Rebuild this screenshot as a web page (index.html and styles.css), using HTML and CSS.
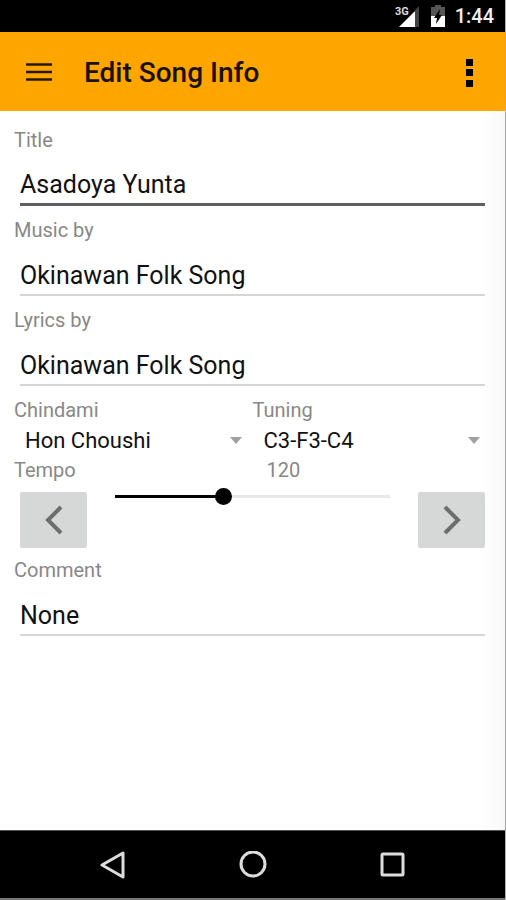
FILE: index.html
```html
<!DOCTYPE html>
<html lang="en">

<head>
    <meta charset="UTF-8">
    <meta name="viewport" content="width=device-width, initial-scale=1.0">
    <title>Edit Song Info</title>
    <link rel="stylesheet" href="styles.css">
</head>

<body>
    <div class="status-bar">
        <svg class="signal" width="28" height="24" viewBox="0 0 28 24" role="img" aria-label="3G signal">
            <path d="M22 6L26 2V23H22z" fill="#444" />
            <path d="M6 23L22 7V23z" fill="#fff" />
            <text class="network" x="2" y="11">3G</text>
        </svg>
        <svg class="battery" width="14" height="22" viewBox="0 0 14 22" role="img" aria-label="Battery charging">
            <path d="M4 0H10V2H14V12H0V2H4z" fill="#555" />
            <path d="M0 11H14V22H0z" fill="#fff" />
            <path d="M9 4L3 13H6L5 19L11 10H8z" fill="#000" />
        </svg>
        <span class="clock">1:44</span>
    </div>

    <header class="app-bar">
        <button class="icon-button" aria-label="Open menu">
            <svg width="26" height="20" viewBox="0 0 26 20">
                <path d="M0 2.500H26M0 10H26M0 17.500H26" stroke="#241800" stroke-width="2.500" />
            </svg>
        </button>
        <h1 class="app-title">Edit Song Info</h1>
        <button class="icon-button" aria-label="More options">
            <svg width="8" height="30" viewBox="0 0 8 30">
                <path d="M1 2H8V9H1zM1 12H8V19H1zM1 23H8V30H1z" fill="#000" />
            </svg>
        </button>
    </header>

    <main class="song-form">
        <div class="field">
            <label for="title">Title</label>
            <input class="text-input active" type="text" id="title" value="Asadoya Yunta">
        </div>
        <div class="field">
            <label for="music">Music by</label>
            <input class="text-input" type="text" id="music" value="Okinawan Folk Song">
        </div>
        <div class="field">
            <label for="lyrics">Lyrics by</label>
            <input class="text-input" type="text" id="lyrics" value="Okinawan Folk Song">
        </div>

        <div class="columns">
            <div class="select-field">
                <label for="chindami">Chindami</label>
                <select id="chindami">
                    <option>Hon Choushi</option>
                </select>
            </div>
            <div class="select-field">
                <label for="tuning">Tuning</label>
                <select id="tuning">
                    <option>C3-F3-C4</option>
                </select>
            </div>
        </div>

        <div class="columns">
            <label for="tempo">Tempo</label>
            <output class="tempo-value" id="tempo_value" for="tempo">120</output>
        </div>
        <div class="tempo-row">
            <button class="step-button" id="tempo_down" aria-label="Slower">
                <svg width="18" height="30" viewBox="0 0 18 30">
                    <path d="M16 2L3 15L16 28" fill="none" stroke="#6c6e6d" stroke-width="4" />
                </svg>
            </button>
            <input class="tempo-slider" type="range" id="tempo" min="20" max="278" value="120" style="--fill: 39%">
            <button class="step-button" id="tempo_up" aria-label="Faster">
                <svg width="18" height="30" viewBox="0 0 18 30">
                    <path d="M2 2L15 15L2 28" fill="none" stroke="#6c6e6d" stroke-width="4" />
                </svg>
            </button>
        </div>

        <div class="field">
            <label for="comment">Comment</label>
            <input class="text-input" type="text" id="comment" value="None">
        </div>
    </main>

    <nav class="nav-bar">
        <button class="icon-button" aria-label="Back">
            <svg width="28" height="28" viewBox="0 0 28 28">
                <path d="M24 2V26L3 14z" fill="none" stroke="#ddd" stroke-width="3" stroke-linejoin="round" />
            </svg>
        </button>
        <button class="icon-button" aria-label="Home">
            <svg width="28" height="28" viewBox="0 0 28 28">
                <circle cx="14" cy="13" r="12" fill="none" stroke="#ddd" stroke-width="3" />
            </svg>
        </button>
        <button class="icon-button" aria-label="Recent apps">
            <svg width="28" height="28" viewBox="0 0 28 28">
                <rect x="3" y="3" width="21" height="21" rx="1" fill="none" stroke="#ddd" stroke-width="3" />
            </svg>
        </button>
    </nav>

    <script>
        const tempo = document.getElementById('tempo');

        function updateTempo() {
            const fill = (tempo.value - tempo.min) / (tempo.max - tempo.min) * 100;
            tempo.style.setProperty('--fill', fill + '%');
            document.getElementById('tempo_value').innerText = tempo.value;
        }

        tempo.addEventListener('input', updateTempo);
        document.getElementById('tempo_down').addEventListener('click', function () {
            tempo.stepDown();
            updateTempo();
        });
        document.getElementById('tempo_up').addEventListener('click', function () {
            tempo.stepUp();
            updateTempo();
        });
    </script>
</body>

</html>
```
FILE: styles.css
```css
* {
    box-sizing: border-box;
}

body {
    font-family: Roboto, sans-serif;
    background: #fff;
    color: #111;
    display: flex;
    flex-direction: column;
    min-height: 100vh;
    margin: 0;
    border-right: 1px solid #aaa;
}

button {
    display: flex;
    align-items: center;
    justify-content: center;
    padding: 0;
    border: none;
    cursor: pointer;
}

.icon-button {
    background: none;
}

.status-bar {
    display: flex;
    align-items: center;
    justify-content: flex-end;
    height: 32px;
    padding-right: 11px;
    background: #000;
    color: #eee;
}

.network {
    font-size: 11px;
    font-weight: 700;
    fill: #ddd;
    stroke: #000;
    stroke-width: 2px;
    paint-order: stroke;
}

.battery {
    margin: 0 10px;
}

.clock {
    font-size: 20px;
    font-weight: 500;
}

.app-bar {
    display: flex;
    align-items: center;
    height: 79px;
    padding: 0 32px 0 26px;
    background: #ffa500;
}

.app-title {
    flex: 1;
    margin: 0 0 0 32px;
    padding-top: 2px;
    font-size: 28px;
    font-weight: 500;
    color: #1a1100;
}

.song-form {
    flex: 1;
    padding: 17px 14px;
    background: linear-gradient(to left, #f8f8f8, #fff 24px);
}

.field {
    display: flex;
    flex-direction: column;
    margin-bottom: 12px;
}

label,
.tempo-value {
    font-size: 20px;
    line-height: 24px;
    color: #888;
}

.text-input {
    height: 54px;
    margin: 0 6px;
    padding: 14px 0 0;
    border: none;
    border-bottom: 2px solid #d6d6d6;
    background: none;
    font-family: inherit;
    font-size: 25px;
    color: #111;
    outline: none;
}

.text-input.active {
    border-bottom: 3px solid #606060;
}

.columns {
    display: grid;
    grid-template-columns: 1fr 1fr;
}

.select-field {
    display: flex;
    flex-direction: column;
}

select {
    appearance: none;
    height: 36px;
    padding: 0 11px;
    border: none;
    background: url("data:image/svg+xml,%3Csvg xmlns='http://www.w3.org/2000/svg' width='12' height='7'%3E%3Cpath d='M0 0H12L6 7z' fill='%23a0a0a0'/%3E%3C/svg%3E") no-repeat right 11px center;
    font-family: inherit;
    font-size: 22px;
    color: #111;
}

.tempo-value {
    padding-left: 14px;
}

.tempo-row {
    display: flex;
    align-items: flex-start;
    gap: 28px;
    margin: 10px 6px;
}

.step-button {
    width: 67px;
    height: 56px;
    border-radius: 2px;
    background: #d6d8d7;
}

.tempo-slider {
    appearance: none;
    flex: 1;
    min-width: 0;
    height: 8px;
    margin: 0;
    background: none;
}

.tempo-slider::-webkit-slider-runnable-track {
    height: 3px;
    background: linear-gradient(to right, #000 var(--fill), #e8e8e8 var(--fill));
}

.tempo-slider::-webkit-slider-thumb {
    appearance: none;
    width: 17px;
    height: 17px;
    margin-top: -7px;
    border-radius: 50%;
    background: #000;
}

.nav-bar {
    display: flex;
    align-items: center;
    justify-content: center;
    gap: 112px;
    height: 70px;
    border-top: 1px solid #555;
    border-bottom: 2px solid #777;
    background: #000;
}
```
